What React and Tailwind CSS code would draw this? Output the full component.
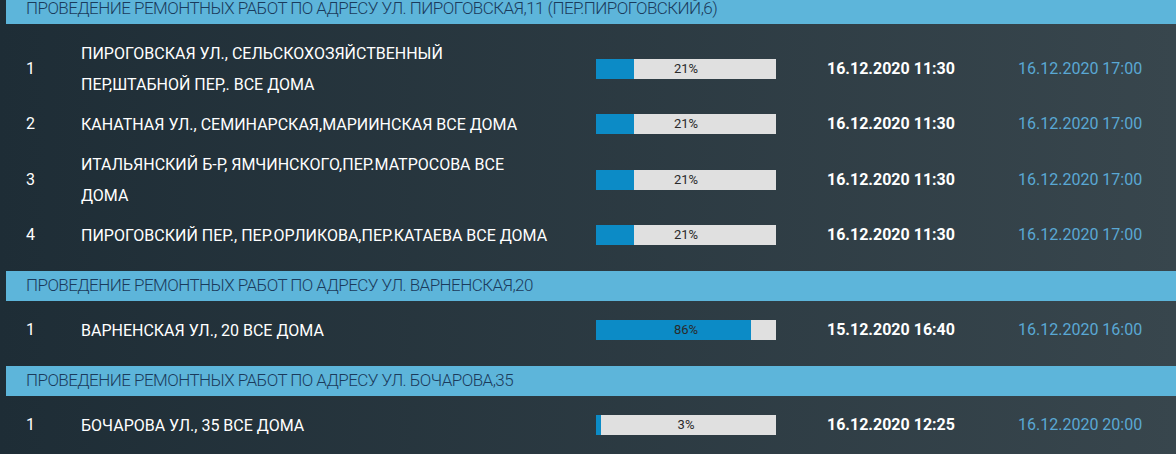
import React from "react";

const sections = [
  {
    title: "ПРОВЕДЕНИЕ РЕМОНТНЫХ РАБОТ ПО АДРЕСУ УЛ. ПИРОГОВСКАЯ,11 (ПЕР.ПИРОГОВСКИЙ,6)",
    rows: [
      { n: 1, lines: ["ПИРОГОВСКАЯ УЛ., СЕЛЬСКОХОЗЯЙСТВЕННЫЙ", "ПЕР,ШТАБНОЙ ПЕР,. ВСЕ ДОМА"], p: 21, start: "16.12.2020 11:30", end: "16.12.2020 17:00" },
      { n: 2, lines: ["КАНАТНАЯ УЛ., СЕМИНАРСКАЯ,МАРИИНСКАЯ ВСЕ ДОМА"], p: 21, start: "16.12.2020 11:30", end: "16.12.2020 17:00" },
      { n: 3, lines: ["ИТАЛЬЯНСКИЙ Б-Р, ЯМЧИНСКОГО,ПЕР.МАТРОСОВА ВСЕ", "ДОМА"], p: 21, start: "16.12.2020 11:30", end: "16.12.2020 17:00" },
      { n: 4, lines: ["ПИРОГОВСКИЙ ПЕР., ПЕР.ОРЛИКОВА,ПЕР.КАТАЕВА ВСЕ ДОМА"], p: 21, start: "16.12.2020 11:30", end: "16.12.2020 17:00" },
    ],
  },
  {
    title: "ПРОВЕДЕНИЕ РЕМОНТНЫХ РАБОТ ПО АДРЕСУ УЛ. ВАРНЕНСКАЯ,20",
    rows: [
      { n: 1, lines: ["ВАРНЕНСКАЯ УЛ., 20 ВСЕ ДОМА"], p: 86, start: "15.12.2020 16:40", end: "16.12.2020 16:00" },
    ],
  },
  {
    title: "ПРОВЕДЕНИЕ РЕМОНТНЫХ РАБОТ ПО АДРЕСУ УЛ. БОЧАРОВА,35",
    rows: [
      { n: 1, lines: ["БОЧАРОВА УЛ., 35 ВСЕ ДОМА"], p: 3, start: "16.12.2020 12:25", end: "16.12.2020 20:00" },
    ],
  },
];

function Bar({ p }) {
  return (
    <div className="relative w-[180px] h-[20px] bg-[#e0e0e0]">
      <div className="h-full bg-[#0c8bc6]" style={{ width: `${p}%` }} />
      <div className="absolute inset-0 flex items-center justify-center text-[13px] text-[#2a2a2a] font-['Roboto',sans-serif]">
        {p}%
      </div>
    </div>
  );
}

export default function App() {
  return (
    <div className="w-[1176px] h-[454px] overflow-hidden bg-linear-to-r from-[#1e2d36] to-[#38464d] font-['Roboto',sans-serif]">
      <div className="-mt-[6px] pl-[6px]">
        {sections.map((s, i) => (
          <div key={i} className="pb-[16px]">
            <div className="h-[30px] bg-[#5db5da] pl-[20px] flex items-center text-[17px] font-light text-[#1b3b5c] tracking-[-0.55px] whitespace-nowrap">
              {s.title}
            </div>
            <div className="pt-[9px]">
              {s.rows.map((r, j) => (
                <div key={j} className="flex items-center py-[4.5px]">
                  <div className="w-[75px] pl-[20px] text-[16px] text-white">{r.n}</div>
                  <div className="w-[515px] text-[16px] leading-[31px] text-white">
                    {r.lines.map((l, k) => (
                      <div key={k} className="whitespace-nowrap">{l}</div>
                    ))}
                  </div>
                  <Bar p={r.p} />
                  <div className="w-[242px] pl-[51px] text-[16px] font-bold text-white">{r.start}</div>
                  <div className="text-[16px] text-[#5aa8d4]">{r.end}</div>
                </div>
              ))}
            </div>
          </div>
        ))}
      </div>
    </div>
  );
}
